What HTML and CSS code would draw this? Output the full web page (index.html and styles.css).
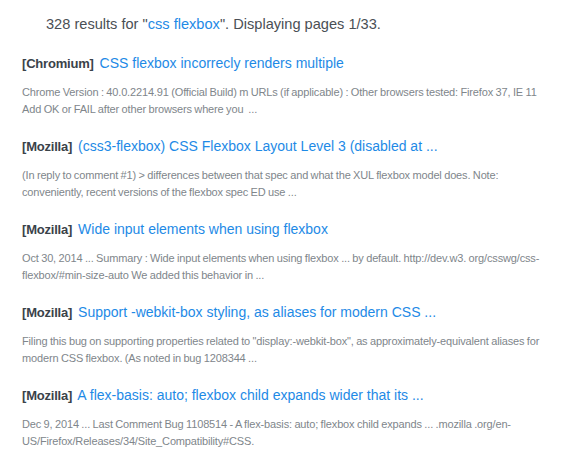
FILE: index.html
```html
<!DOCTYPE html>
<html>
<head>
<meta charset="utf-8">
<link rel="stylesheet" href="styles.css">
</head>
<body>
<div class="page">
  <p class="summary">328 results for "<a class="q" href="#">css flexbox</a>". Displaying pages 1/33.</p>
  <ul class="results">
    <li class="result">
      <h3 class="title"><span class="src">[Chromium]</span> <a href="#">CSS flexbox incorrecly renders multiple</a></h3>
      <p class="snippet">Chrome Version : 40.0.2214.91 (Official Build) m URLs (if applicable) : Other browsers tested: Firefox 37, IE 11 Add OK or FAIL after other browsers where you &nbsp;...</p>
    </li>
    <li class="result">
      <h3 class="title"><span class="src">[Mozilla]</span> <a href="#">(css3-flexbox) CSS Flexbox Layout Level 3 (disabled at ...</a></h3>
      <p class="snippet">(In reply to comment #1) &gt; differences between that spec and what the XUL flexbox model does. Note: conveniently, recent versions of the flexbox spec ED use ...</p>
    </li>
    <li class="result">
      <h3 class="title"><span class="src">[Mozilla]</span> <a href="#">Wide input elements when using flexbox</a></h3>
      <p class="snippet">Oct 30, 2014 ... Summary : Wide input elements when using flexbox ... by default. http://dev.w3. org/csswg/css-flexbox/#min-size-auto We added this behavior in ...</p>
    </li>
    <li class="result">
      <h3 class="title"><span class="src">[Mozilla]</span> <a href="#">Support -webkit-box styling, as aliases for modern CSS ...</a></h3>
      <p class="snippet">Filing this bug on supporting properties related to "display:-webkit-box", as approximately-equivalent aliases for modern CSS flexbox. (As noted in bug 1208344 ...</p>
    </li>
    <li class="result">
      <h3 class="title"><span class="src">[Mozilla]</span> <a href="#">A flex-basis: auto; flexbox child expands wider that its ...</a></h3>
      <p class="snippet">Dec 9, 2014 ... Last Comment Bug 1108514 - A flex-basis: auto; flexbox child expands ... .mozilla .org/en-US/Firefox/Releases/34/Site_Compatibility#CSS.</p>
    </li>
  </ul>
</div>
</body>
</html>
```
FILE: styles.css
```css
html, body {
  margin: 0;
  padding: 0;
  background: #ffffff;
}
body {
  font-family: "Liberation Sans", Arial, sans-serif;
}
a {
  color: #1e8ae6;
  text-decoration: none;
}
.page {
  padding: 12px 0 0 22px;
  width: 522px;
}
.summary {
  margin: 0 0 0 24px;
  font-size: 14.6px;
  line-height: 24px;
  color: #4a4f55;
}
.results {
  list-style: none;
  margin: 17px 0 0 0;
  padding: 0;
}
.result {
  margin: 0 0 19px 0;
}
.title {
  margin: 0;
  font-size: 14px;
  line-height: 20px;
  font-weight: normal;
}
.src {
  font-weight: bold;
  font-size: 13px;
  letter-spacing: -0.2px;
  color: #3a4249;
  margin-right: 2px;
}
.snippet {
  margin: 10px 0 0 0;
  font-size: 11px;
  letter-spacing: -0.15px;
  word-spacing: -0.4px;
  line-height: 16.5px;
  color: #80868b;
}
```
